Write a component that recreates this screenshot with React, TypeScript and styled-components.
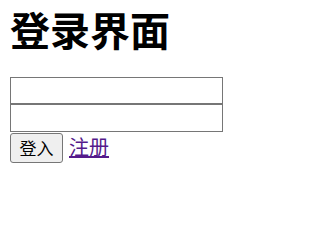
import React from "react";
import styled, { createGlobalStyle } from "styled-components";

const Global = createGlobalStyle`
  html, body { margin: 0; padding: 0; background: #ffffff; }
  body { font-family: "Noto Sans CJK SC", "Noto Sans", sans-serif; color: #000; }
`;

const Page = styled.div`
  padding: 0 10px;
`;

const Title = styled.h1`
  margin: 0 0 19px;
  font-size: 40px;
  line-height: normal;
  font-weight: 700;
  font-family: "Noto Sans CJK SC", sans-serif;
`;

const Form = styled.form`
  display: flex;
  flex-direction: column;
  align-items: flex-start;
`;

const Field = styled.input<{ $h: number }>`
  display: block;
  box-sizing: border-box;
  width: 213px;
  height: ${(p) => p.$h}px;
  margin: 0;
  padding: 1px 3px;
  border: 1px solid #767676;
  border-radius: 0;
  background: #fff;
  font-size: 16.7px;
  font-family: "Noto Sans CJK SC", sans-serif;
`;

const Actions = styled.div`
  display: flex;
  align-items: baseline;
  gap: 6px;
`;

const Button = styled.button`
  box-sizing: border-box;
  width: 53px;
  height: 30px;
  margin: 0;
  padding: 0 7px;
  border: 1px solid #767676;
  border-radius: 3px;
  background: #efefef;
  color: #000;
  font-size: 17px;
  line-height: 1;
  font-family: "Noto Sans CJK SC", sans-serif;
  display: inline-flex;
  align-items: center;
  justify-content: center;
`;

const Link = styled.a`
  color: #551a8b;
  text-decoration: underline;
  font-size: 20px;
  font-family: "Noto Sans CJK SC", sans-serif;
`;

export default function App() {
  return (
    <>
      <Global />
      <Page>
        <Title>登录界面</Title>
        <Form onSubmit={(e) => e.preventDefault()}>
          <Field $h={27} type="text" />
          <Field $h={28} type="password" />
          <Actions>
            <Button type="submit">登入</Button>
            <Link href="#">注册</Link>
          </Actions>
        </Form>
      </Page>
    </>
  );
}
